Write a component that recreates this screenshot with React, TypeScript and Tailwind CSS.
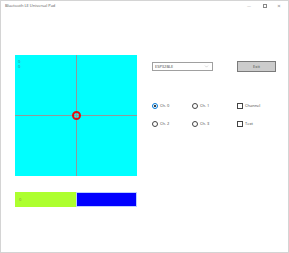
import { ChevronDown } from "lucide-react";

function Radio({ label, checked }: { label: string; checked?: boolean }) {
	return (
		<div className="flex items-center gap-[2px]">
			{checked ? (
				<span className="flex h-[6px] w-[6px] items-center justify-center rounded-full border border-[#0078d7]">
					<span className="h-[2px] w-[2px] rounded-full bg-black" />
				</span>
			) : (
				<span className="h-[6px] w-[6px] rounded-full border border-[#444]" />
			)}
			<span>{label}</span>
		</div>
	);
}

function Check({ label }: { label: string }) {
	return (
		<div className="flex items-center gap-[2px]">
			<span className="h-[6px] w-[6px] border border-[#444] bg-white" />
			<span>{label}</span>
		</div>
	);
}

export default function App() {
	return (
		<div
			className="flex h-[253px] w-[289px] flex-col border border-[#d4d4d4] bg-white text-[4px] text-[#444]"
			style={{ fontFamily: '"Open Sans", "Liberation Sans", sans-serif' }}
		>
			{/* title bar */}
			<div className="flex h-[10px] items-center pl-[4px] pr-[3px]">
				<span className="flex-1 text-[#555]">Bluetooth LE Universal Pad</span>
				<span className="w-[16px] text-center text-[#999]">—</span>
				<span className="flex w-[16px] justify-center">
					<span className="h-[4px] w-[4px] border border-[#888]" />
				</span>
				<span className="w-[12px] text-center text-[6px] leading-none text-[#777]">×</span>
			</div>

			<div className="flex">
				{/* left column: pad + bar */}
				<div className="flex flex-col pl-[14px] pt-[44px]">
					<div className="relative h-[121px] w-[122px] bg-[#00ffff]">
						<div className="absolute left-[3px] top-[4px] flex flex-col leading-[5px] text-[#2a8a8a]">
							<span>0</span>
							<span>0</span>
						</div>
						<div className="absolute left-[61px] top-0 h-full w-px bg-[#909a9a]" />
						<div className="absolute left-0 top-[60px] h-px w-full bg-[#909a9a]" />
						<div className="absolute left-[57px] top-[56px] h-[9px] w-[9px] rounded-full border-2 border-[#e01010]" />
					</div>
					<div className="mt-[16px] flex h-[15px] w-[122px]">
						<div className="flex w-[61px] items-center bg-[#adff2f] pl-[4px] text-[#7a9a3a]">0</div>
						<div className="w-[61px] border border-[#bcd0ff] bg-[#0000ff]" />
					</div>
				</div>

				{/* right column: controls */}
				<div className="ml-[15px] flex flex-col pt-[50px]">
					<div className="flex items-start">
						<div className="mt-[1px] flex h-[9px] w-[61px] items-center justify-between border border-[#a0a0a0] bg-white pl-[2px] pr-[3px]">
							<span>ESP32BLE</span>
							<ChevronDown size={5} strokeWidth={1.5} color="#888" />
						</div>
						<div className="ml-[24px] flex h-[11px] w-[39px] items-center justify-center border border-[#7a7a7a] bg-[#cccccc]">
							Exit
						</div>
					</div>
					<div className="mt-[30px] grid grid-cols-[40px_45px_auto] gap-y-[11px] leading-[7px]">
						<Radio label="Ch. 0" checked />
						<Radio label="Ch. 1" />
						<Check label="Channel" />
						<Radio label="Ch. 2" />
						<Radio label="Ch. 3" />
						<Check label="Text" />
					</div>
				</div>
			</div>
		</div>
	);
}
